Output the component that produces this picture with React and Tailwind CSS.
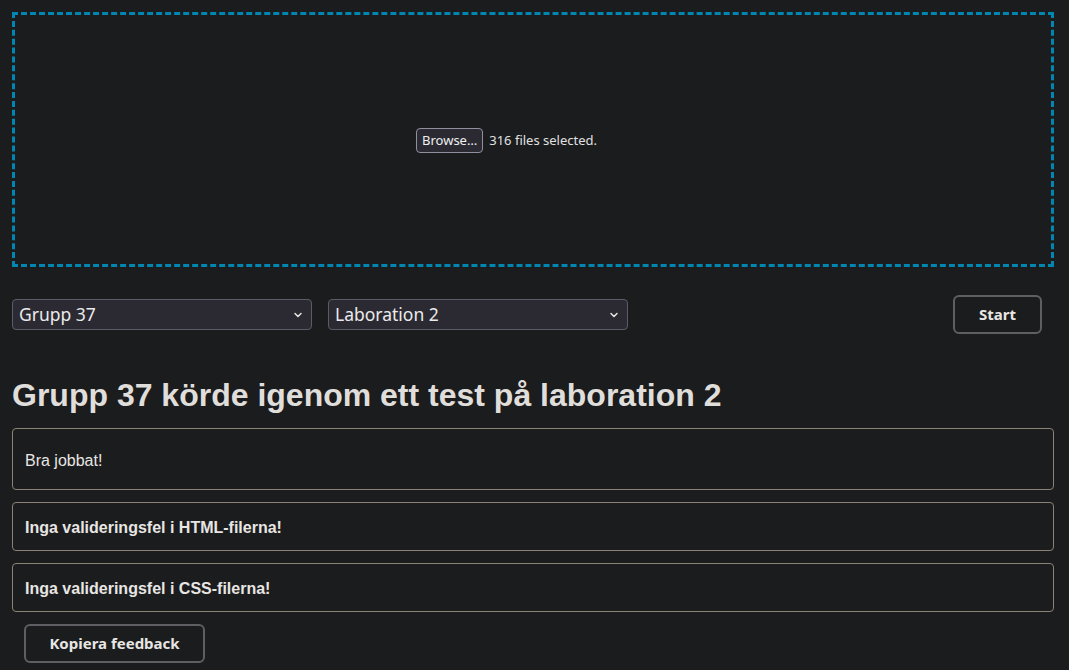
import React from "react";

const ui = { fontFamily: '"Noto Sans", "Open Sans", sans-serif' };
const body = { fontFamily: '"Liberation Sans", Arial, sans-serif' };

function Chevron() {
  return (
    <svg width="10" height="10" viewBox="0 0 10 10" className="shrink-0">
      <path d="M2 3.5 L5 6.5 L8 3.5" fill="none" stroke="#e8e6e3" strokeWidth="1.5" strokeLinecap="round" strokeLinejoin="round" />
    </svg>
  );
}

function FakeSelect({ label }) {
  return (
    <div
      style={ui}
      className="w-[300px] h-[31px] flex items-center justify-between pl-[6px] pr-[8px] bg-[#2b2a33] border border-[#5b5b66] rounded-[4px] text-[17.5px] text-[#ebebeb]"
    >
      <span>{label}</span>
      <Chevron />
    </div>
  );
}

export default function App() {
  return (
    <div className="min-h-screen bg-[#1b1c1e] text-[#e8e6e3] pl-3 pr-[15px] pt-3 pb-2">
      {/* Drop zone */}
      <div className="h-[255px] border-[3px] border-dashed border-[#0086b0] flex items-center justify-center">
        <div style={ui} className="w-[234px] flex items-center gap-[6px] text-[13px] text-[#e0e0e0] mt-[2px]">
          <span className="px-[5px] h-[25px] flex items-center bg-[#2b2a33] border border-[#8f8f9d] rounded-[4px] text-[#f0f0f0]">
            Browse…
          </span>
          <span>316 files selected.</span>
        </div>
      </div>

      {/* Controls */}
      <div className="flex items-center mt-[28px] pr-[12px]">
        <FakeSelect label="Grupp 37" />
        <div className="w-[16px]" />
        <FakeSelect label="Laboration 2" />
        <div className="flex-1" />
        <button
          style={ui}
          className="w-[89px] h-[39px] border-2 border-[#5f5f63] rounded-[6px] text-[15px] font-bold text-[#e8e6e3]"
        >
          Start
        </button>
      </div>

      <h1 style={body} className="mt-[43px] text-[32px] font-bold leading-[36px] text-[#e0dedb]">
        Grupp 37 körde igenom ett test på laboration 2
      </h1>

      <div style={body} className="mt-[15px] flex flex-col gap-[12px]">
        <div className="h-[62px] border border-[#8c8273] rounded-[4px] px-3 pt-[3px] flex items-center text-[16px]">
          Bra jobbat!
        </div>
        <div className="h-[49px] border border-[#8c8273] rounded-[4px] px-3 pt-[2px] flex items-center text-[16px] font-bold">
          Inga valideringsfel i HTML-filerna!
        </div>
        <div className="h-[49px] border border-[#8c8273] rounded-[4px] px-3 pt-[2px] flex items-center text-[16px] font-bold">
          Inga valideringsfel i CSS-filerna!
        </div>
      </div>

      <button
        style={ui}
        className="mt-[12px] ml-[12px] w-[181px] h-[39px] border-2 border-[#5f5f63] rounded-[6px] text-[15px] font-bold text-[#e8e6e3]"
      >
        Kopiera feedback
      </button>
    </div>
  );
}
